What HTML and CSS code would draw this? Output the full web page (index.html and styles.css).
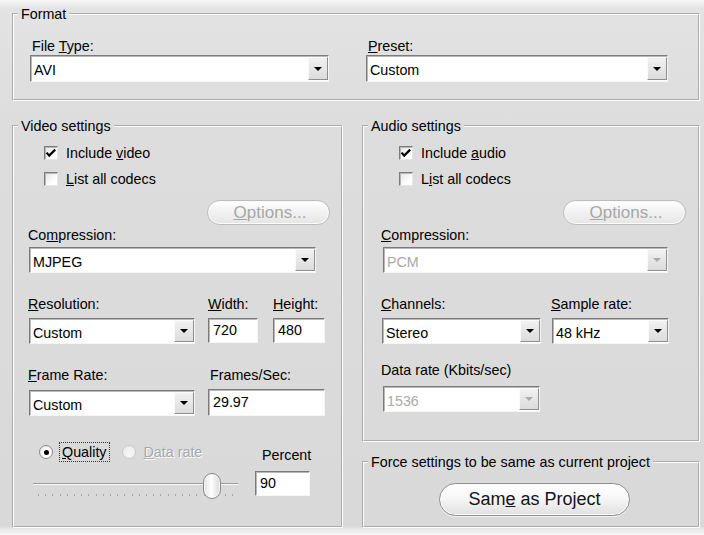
FILE: index.html
```html
<!DOCTYPE html>
<html>
<head>
<meta charset="utf-8">
<title>Export settings</title>
<link rel="stylesheet" href="styles.css">
</head>
<body>
<div class="dialog">
  <fieldset class="group format">
    <legend>Format</legend>
    <div class="format-body">
      <div class="field">
        <div class="lbl ind">File <u>T</u>ype:</div>
        <div class="select tall"><span class="val">AVI</span><span class="drop"></span></div>
      </div>
      <div class="field">
        <div class="lbl ind"><u>P</u>reset:</div>
        <div class="select tall"><span class="val">Custom</span><span class="drop"></span></div>
      </div>
    </div>
  </fieldset>

  <div class="lower">
    <fieldset class="group video">
      <legend>Video settings</legend>
      <div class="gbody vbody">
        <div class="check-row">
          <span class="cb"><svg width="14" height="14" viewBox="0 0 14 14"><path d="M2.6 6.6 L5.2 9.6 L11.2 3.6" fill="none" stroke="#000" stroke-width="2.2"/></svg></span>
          <span>Include <u>v</u>ideo</span>
        </div>
        <div class="check-row second">
          <span class="cb"></span>
          <span><u>L</u>ist all codecs</span>
        </div>
        <div class="pill"><span><u>O</u>ptions...</span></div>
        <div class="lbl comp-lbl">Co<u>m</u>pression:</div>
        <div class="select comp"><span class="val">MJPEG</span><span class="drop"></span></div>

        <div class="res-grid">
          <div class="lbl"><u>R</u>esolution:</div>
          <div class="lbl"><u>W</u>idth:</div>
          <div class="lbl"><u>H</u>eight:</div>
          <div class="select res-sel"><span class="val">Custom</span><span class="drop"></span></div>
          <div class="input w-width">720</div>
          <div class="input w-height">480</div>
        </div>

        <div class="fr-grid">
          <div class="lbl"><u>F</u>rame Rate:</div>
          <div class="lbl fps-lbl">Frames/Sec:</div>
          <div class="select res-sel"><span class="val">Custom</span><span class="drop"></span></div>
          <div class="input w-fps">29.97</div>
        </div>

        <div class="bottom">
          <div class="left-block">
            <div class="radio-row">
              <span class="radio on"></span>
              <span class="focus"><u>Q</u>uality</span>
              <span class="radio off"></span>
              <span class="dis-text"><u>D</u>ata rate</span>
            </div>
            <div class="slider">
              <div class="track"></div>
              <div class="ticks"></div>
              <div class="thumb" style="left:170px"></div>
            </div>
          </div>
          <div class="right-block">
            <div class="lbl pct-lbl">Percent</div>
            <div class="input w-pct">90</div>
          </div>
        </div>
      </div>
    </fieldset>

    <div class="right-col">
      <fieldset class="group audio">
        <legend>Audio settings</legend>
        <div class="gbody abody">
          <div class="check-row">
            <span class="cb"><svg width="14" height="14" viewBox="0 0 14 14"><path d="M2.6 6.6 L5.2 9.6 L11.2 3.6" fill="none" stroke="#000" stroke-width="2.2"/></svg></span>
            <span>Include <u>a</u>udio</span>
          </div>
          <div class="check-row second">
            <span class="cb"></span>
            <span>L<u>i</u>st all codecs</span>
          </div>
          <div class="pill"><span><u>O</u>ptions...</span></div>
          <div class="lbl comp-lbl"><u>C</u>ompression:</div>
          <div class="select comp disabled"><span class="val">PCM</span><span class="drop"></span></div>

          <div class="ch-grid">
            <div class="lbl"><u>C</u>hannels:</div>
            <div class="lbl"><u>S</u>ample rate:</div>
            <div class="select ch-sel"><span class="val">Stereo</span><span class="drop"></span></div>
            <div class="select sr-sel"><span class="val">48 kHz</span><span class="drop"></span></div>
          </div>

          <div class="lbl dr-lbl">Data rate (Kbits/sec)</div>
          <div class="select dr-sel disabled"><span class="val">1536</span><span class="drop"></span></div>
        </div>
      </fieldset>

      <fieldset class="group force">
        <legend>Force settings to be same as current project</legend>
        <div class="force-body">
          <div class="big-btn"><span>Sam<u>e</u> as Project</span></div>
        </div>
      </fieldset>
    </div>
  </div>
</div>
</body>
</html>
```

FILE: styles.css
```css
* { box-sizing: border-box; }

html, body {
  margin: 0;
  padding: 0;
}

body {
  width: 704px;
  height: 535px;
  overflow: hidden;
  font-family: "Liberation Sans", Arial, sans-serif;
  font-size: 14.3px;
  color: #000;
  background: linear-gradient(#f7f7f7 0px, #e3e3e3 9px, #dddddd 120px, #d9d9d9 526px, #ececec 530px, #f7f7f7 535px);
}

u {
  text-decoration: underline;
  text-underline-offset: 1px;
}

.dialog {
  padding: 7px 4px 0 12px;
  display: flex;
  flex-direction: column;
  gap: 18px;
}

fieldset.group {
  margin: 0;
  padding: 0;
  min-width: 0;
  border: 2px groove #ffffff;
}

legend {
  margin-left: 4px;
  padding: 0 3px;
  font-size: 14.3px;
  line-height: 14px;
}

.format { height: 94px; }

.format-body {
  padding: 17px 0 0 16px;
  display: grid;
  grid-template-columns: 299px 302px;
  column-gap: 37px;
}

.lbl {
  line-height: 16px;
  white-space: nowrap;
}

.ind { margin-left: 2px; }

.field .select { margin-top: 1px; }

/* select / combo box */
.select {
  display: flex;
  height: 26px;
  background: #fff;
  border: 1px solid;
  border-color: #7b7b7b #f6f6f6 #f6f6f6 #7b7b7b;
  box-shadow: inset 1px 1px 0 #b9b9b9;
}
.select.tall { height: 27px; }

.select .val {
  flex: 1;
  align-self: center;
  padding: 3px 0 0 3px;
  line-height: 16px;
  white-space: nowrap;
}

.select .drop {
  width: 20px;
  margin: 1px 0 1px 0;
  border: 1px solid;
  border-color: #fbfbfb #8e8e8e #8e8e8e #fbfbfb;
  background: linear-gradient(#f1f1f1, #dcdcdc);
  display: flex;
  align-items: center;
  justify-content: center;
}

.select .drop::after {
  content: "";
  width: 0;
  height: 0;
  border-left: 4px solid transparent;
  border-right: 4px solid transparent;
  border-top: 4px solid #000;
}

.select.disabled .val { color: #a9a9a9; }
.select.disabled .drop::after { border-top-color: #a9a9a9; }

/* text input */
.input {
  height: 25px;
  background: #fff;
  border: 1px solid;
  border-color: #7b7b7b #f6f6f6 #f6f6f6 #7b7b7b;
  box-shadow: inset 1px 1px 0 #b9b9b9;
  padding-left: 4px;
  line-height: 23px;
}

/* group bodies */
.video { width: 331px; height: 409px; }

.right-col {
  width: 338px;
  display: flex;
  flex-direction: column;
  gap: 13px;
}
.audio { height: 323px; }
.force { height: 73px; }

.lower {
  display: flex;
  gap: 19px;
}

.gbody { padding-top: 12px; }
.vbody { padding-left: 14px; }
.abody { padding-left: 17px; }

.check-row {
  display: flex;
  align-items: center;
  gap: 8px;
  height: 16px;
  white-space: nowrap;
}
.check-row.second { margin-top: 10px; }
.vbody .check-row { margin-left: 16px; }
.abody .check-row { margin-left: 18px; }

.cb {
  width: 14px;
  height: 14px;
  flex: none;
  border: 1px solid;
  border-color: #7b7b7b #e6e6e6 #e6e6e6 #7b7b7b;
  background: linear-gradient(135deg, #e4e4e4, #ffffff 70%);
  box-shadow: inset 1px 1px 0 #b7b7b7;
  position: relative;
}
.cb svg {
  position: absolute;
  left: -1px;
  top: -1px;
}

.pill {
  margin-top: 13px;
  width: 123px;
  height: 25px;
  border: 1px solid #bcbcbc;
  border-radius: 13px;
  background: linear-gradient(#ffffff, #f1f1f1 50%, #e6e6e6);
  box-shadow: inset 0 0 0 1px #fbfbfb;
  color: #a7a7a7;
  font-size: 17px;
  display: flex;
  align-items: center;
  justify-content: center;
  padding-left: 3px;
}
.vbody .pill { margin-left: 179px; }
.abody .pill { margin-left: 182px; }

.comp-lbl { margin-top: 2px; }
.comp { margin-top: 4px; }
.vbody .comp { margin-left: 1px; width: 287px; }
.abody .comp { margin-left: 2px; width: 285px; }

.res-grid {
  margin-top: 23px;
  display: grid;
  grid-template-columns: 180px 65px 53px;
  row-gap: 6px;
}
.res-sel { margin-left: 1px; width: 166px; }
.w-width { width: 50px; }
.w-height { width: 52px; }

.fr-grid {
  margin-top: 23px;
  display: grid;
  grid-template-columns: 180px 118px;
  row-gap: 7px;
}
.fps-lbl { margin-left: 2px; }
.w-fps { width: 117px; height: 27px; line-height: 25px; margin-top: -1px; }

.bottom {
  margin-top: 28px;
  display: flex;
}

.left-block {
  margin-left: 5px;
  width: 205px;
}

.radio-row {
  display: flex;
  align-items: center;
  height: 16px;
  white-space: nowrap;
}

.radio {
  width: 14px;
  height: 14px;
  flex: none;
  border-radius: 50%;
  position: relative;
}
.radio.on {
  margin-left: 6px;
  border: 1px solid #8a8a8a;
  background: radial-gradient(circle at 60% 65%, #ffffff 30%, #e2e2e2 100%);
}
.radio.on::after {
  content: "";
  position: absolute;
  left: 3.5px;
  top: 3.5px;
  width: 5px;
  height: 5px;
  border-radius: 50%;
  background: #000;
}
.radio.off {
  margin-left: 12px;
  border: 1px solid #cacaca;
  background: radial-gradient(circle at 60% 65%, #f4f4f4 30%, #e4e4e4 100%);
}

.focus {
  margin-left: 6px;
  padding: 1px 2px;
  border: 1px dotted #333;
  line-height: 16px;
}

.dis-text {
  margin-left: 8px;
  color: #a8a8a8;
  text-shadow: 1px 1px 0 #ffffff;
}

.slider {
  margin-top: 13px;
  height: 26px;
  position: relative;
}
.track {
  position: absolute;
  left: 0;
  right: 0;
  top: 10px;
  height: 2px;
  border-top: 1px solid #9c9c9c;
  border-bottom: 1px solid #fafafa;
}
.ticks {
  position: absolute;
  left: 5px;
  right: 4px;
  top: 21px;
  height: 2px;
  background: repeating-linear-gradient(90deg, #a6a6a6 0 1px, transparent 1px 7.2px);
}
.thumb {
  position: absolute;
  top: 0;
  width: 18px;
  height: 26px;
  border: 1px solid #8b8b8b;
  border-radius: 9px;
  background: linear-gradient(90deg, #e2e2e2, #ffffff 45%, #d8d8d8);
  box-shadow: inset 0 0 0 1px #f6f6f6;
}

.right-block { margin-left: 17px; }
.pct-lbl { margin-top: 3px; margin-left: 7px; }
.w-pct { margin-top: 8px; width: 55px; }

.ch-grid {
  margin-top: 23px;
  display: grid;
  grid-template-columns: 170px 118px;
  row-gap: 6px;
}
.ch-sel { margin-left: 1px; width: 159px; }
.sr-sel { margin-left: 1px; width: 117px; }

.dr-lbl { margin-top: 18px; }
.dr-sel { margin-top: 8px; margin-left: 2px; width: 157px; }

.force-body { padding: 14px 0 0 75px; }

.big-btn {
  width: 191px;
  height: 33px;
  border: 1px solid #8e8e8e;
  border-radius: 17px;
  background: linear-gradient(#ffffff 0%, #f7f7f7 45%, #e0e0e0 100%);
  box-shadow: inset 0 0 0 1px #fdfdfd, 0 1px 0 #f2f2f2;
  font-size: 18px;
  color: #141414;
  display: flex;
  align-items: center;
  justify-content: center;
}
```
